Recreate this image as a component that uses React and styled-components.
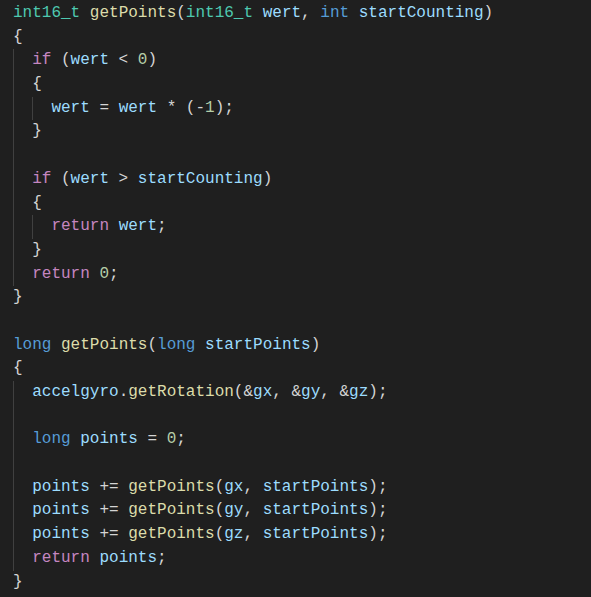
import React from 'react';
import styled, { createGlobalStyle } from 'styled-components';

const colors = {
    type: '#4ec9b0',
    kw: '#569cd6',
    ctrl: '#c586c0',
    fn: '#dcdcaa',
    var: '#9cdcfe',
    num: '#b5cea8',
    op: '#d4d4d4',
};

// each line: [indent level, tokens]; empty lines carry only their guide depth
const lines = [
    [0, [['int16_t', 'type'], [' '], ['getPoints', 'fn'], ['('], ['int16_t', 'type'], [' '], ['wert', 'var'], [', '], ['int', 'kw'], [' '], ['startCounting', 'var'], [')']]],
    [0, [['{']]],
    [1, [['if', 'ctrl'], [' ('], ['wert', 'var'], [' < '], ['0', 'num'], [')']]],
    [1, [['{']]],
    [2, [['wert', 'var'], [' = '], ['wert', 'var'], [' * (-'], ['1', 'num'], [');']]],
    [1, [['}']]],
    [1, []],
    [1, [['if', 'ctrl'], [' ('], ['wert', 'var'], [' > '], ['startCounting', 'var'], [')']]],
    [1, [['{']]],
    [2, [['return', 'ctrl'], [' '], ['wert', 'var'], [';']]],
    [1, [['}']]],
    [1, [['return', 'ctrl'], [' '], ['0', 'num'], [';']]],
    [0, [['}']]],
    [0, []],
    [0, [['long', 'kw'], [' '], ['getPoints', 'fn'], ['('], ['long', 'kw'], [' '], ['startPoints', 'var'], [')']]],
    [0, [['{']]],
    [1, [['accelgyro', 'var'], ['.'], ['getRotation', 'fn'], ['(&'], ['gx', 'var'], [', &'], ['gy', 'var'], [', &'], ['gz', 'var'], [');']]],
    [1, []],
    [1, [['long', 'kw'], [' '], ['points', 'var'], [' = '], ['0', 'num'], [';']]],
    [1, []],
    [1, [['points', 'var'], [' += '], ['getPoints', 'fn'], ['('], ['gx', 'var'], [', '], ['startPoints', 'var'], [');']]],
    [1, [['points', 'var'], [' += '], ['getPoints', 'fn'], ['('], ['gy', 'var'], [', '], ['startPoints', 'var'], [');']]],
    [1, [['points', 'var'], [' += '], ['getPoints', 'fn'], ['('], ['gz', 'var'], [', '], ['startPoints', 'var'], [');']]],
    [1, [['return', 'ctrl'], [' '], ['points', 'var'], [';']]],
    [0, [['}']]],
];

const App = () => {
    return (
        <>
            <GlobalStyle />
            <Editor>
                {lines.map(([indent, tokens], i) => (
                    <Line key={i}>
                        {Array.from({ length: indent }).map((_, g) => <Guide key={g} />)}
                        {tokens.map(([text, kind = 'op'], t) => (
                            <Token key={t} $kind={kind}>{text}</Token>
                        ))}
                    </Line>
                ))}
            </Editor>
        </>
    );
};

const GlobalStyle = createGlobalStyle`
    html, body {
        margin: 0;
        padding: 0;
        background: #1f1f1f;
    }
`;

const Editor = styled.div`
    width: 591px;
    height: 597px;
    box-sizing: border-box;
    padding: 2px 0 0 13px;
    background: #1f1f1f;
    font-family: "Liberation Mono", "DejaVu Sans Mono", monospace;
    font-size: 16px;
    overflow: hidden;
`;

const Line = styled.div`
    display: flex;
    height: 23.7px;
    line-height: 23.7px;
    white-space: pre;
`;

const Guide = styled.span`
    flex: none;
    width: 2ch;
    height: 100%;
    box-sizing: border-box;
    border-left: 1px solid #404040;
`;

const Token = styled.span`
    color: ${({ $kind }) => colors[$kind]};
`;

export default App;
